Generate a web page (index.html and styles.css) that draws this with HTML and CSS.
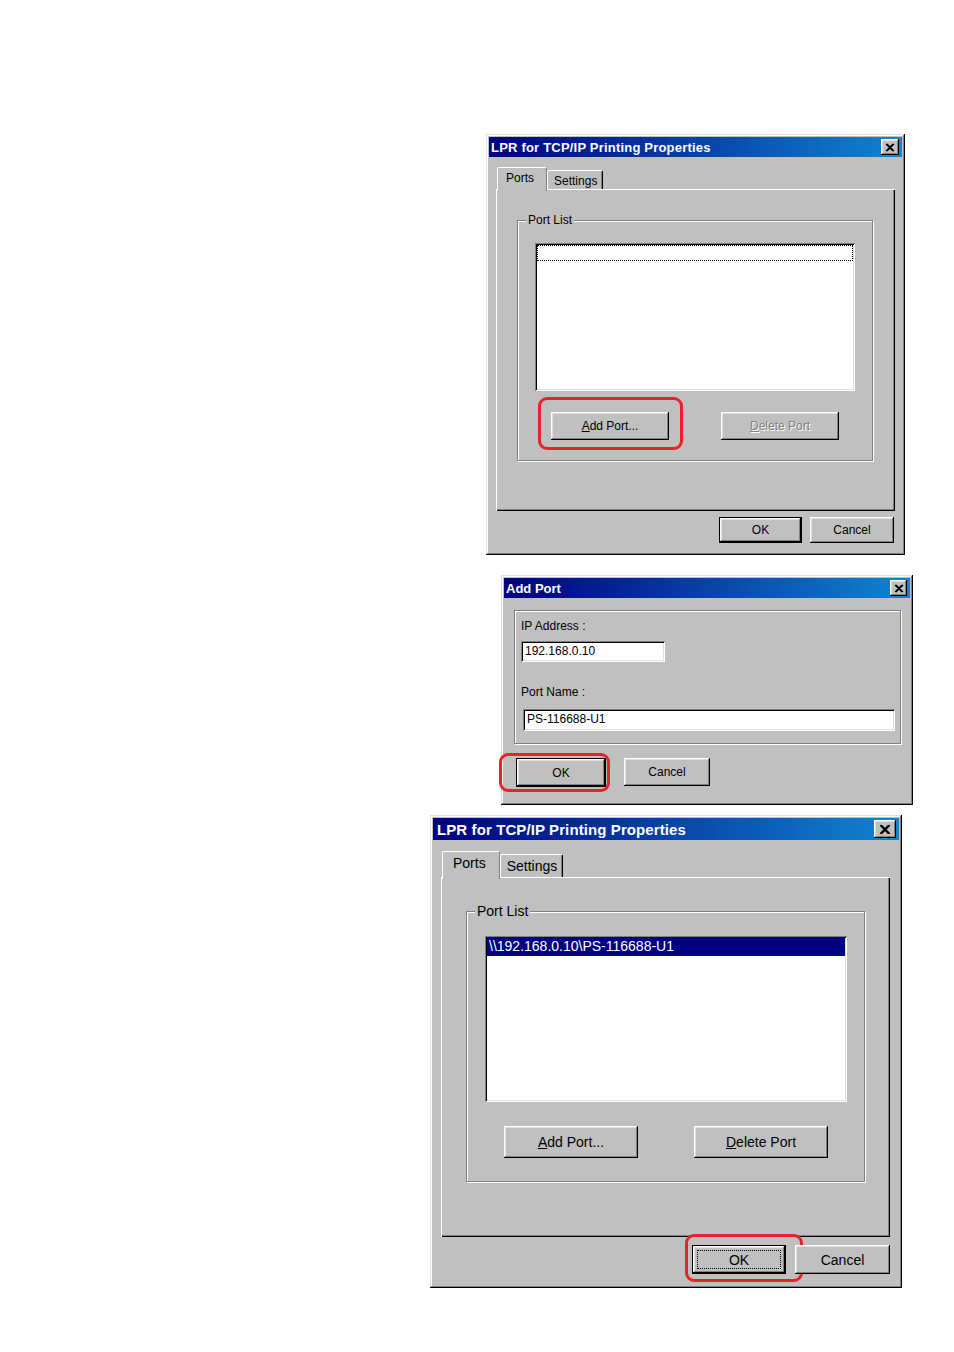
FILE: index.html
```html
<!DOCTYPE html>
<html>
<head>
  <meta charset="UTF-8">
  <title>LPR for TCP/IP Printing – Add Port</title>
  <link rel="stylesheet" href="styles.css">
</head>
<body>
  <div class="page">

    <!-- step 1: properties dialog, empty list -->
    <div class="win win-a">
      <div class="titlebar">
        <span class="title">LPR for TCP/IP Printing Properties</span>
        <span class="close"><svg viewBox="0 0 10 9"><path d="M1 1 L8 8 M2 1 L9 8 M8 1 L1 8 M9 1 L2 8" stroke="#000" stroke-width="1.2"/></svg></span>
      </div>
      <div class="tabs">
        <div class="tab active">Ports</div>
        <div class="tab">Settings</div>
      </div>
      <div class="tab-panel">
        <div class="group">
          <span class="group-label">Port List</span>
          <div class="listbox">
            <div class="list-row focus"></div>
          </div>
          <div class="group-buttons">
            <button class="btn marked"><u>A</u>dd Port...<span class="ring"></span></button>
            <button class="btn disabled"><u>D</u>elete Port</button>
          </div>
        </div>
      </div>
      <div class="dialog-buttons">
        <button class="btn default ok">OK</button>
        <button class="btn cancel">Cancel</button>
      </div>
    </div>

    <!-- step 2: add port -->
    <div class="win win-b">
      <div class="titlebar">
        <span class="title">Add Port</span>
        <span class="close"><svg viewBox="0 0 10 9"><path d="M1 1 L8 8 M2 1 L9 8 M8 1 L1 8 M9 1 L2 8" stroke="#000" stroke-width="1.2"/></svg></span>
      </div>
      <div class="group plain">
        <div class="field-label">IP Address :</div>
        <div class="field field-ip">192.168.0.10</div>
        <div class="field-label second">Port Name :</div>
        <div class="field field-name">PS-116688-U1</div>
      </div>
      <div class="add-buttons">
        <button class="btn default ok marked">OK<span class="ring"></span></button>
        <button class="btn cancel">Cancel</button>
      </div>
    </div>

    <!-- step 3: properties dialog, port added -->
    <div class="win win-c">
      <div class="titlebar">
        <span class="title">LPR for TCP/IP Printing Properties</span>
        <span class="close"><svg viewBox="0 0 10 9"><path d="M1 1 L8 8 M2 1 L9 8 M8 1 L1 8 M9 1 L2 8" stroke="#000" stroke-width="1.2"/></svg></span>
      </div>
      <div class="tabs">
        <div class="tab active">Ports</div>
        <div class="tab">Settings</div>
      </div>
      <div class="tab-panel">
        <div class="group">
          <span class="group-label">Port List</span>
          <div class="listbox">
            <div class="list-row selected">\\192.168.0.10\PS-116688-U1</div>
          </div>
          <div class="group-buttons">
            <button class="btn"><u>A</u>dd Port...</button>
            <button class="btn"><u>D</u>elete Port</button>
          </div>
        </div>
      </div>
      <div class="dialog-buttons">
        <button class="btn default ok marked"><span class="focus-box">OK</span><span class="ring"></span></button>
        <button class="btn cancel">Cancel</button>
      </div>
    </div>

  </div>
</body>
</html>
```

FILE: styles.css
```css
* {
  box-sizing: border-box;
}

body {
  margin: 0;
  background: #fff;
  font-family: "Liberation Sans", Arial, sans-serif;
  font-size: 12px;
  color: #000;
}

.page {
  width: 954px;
  height: 1352px;
  padding-top: 134px;
}

/* window frame */
.win {
  background: #c0c0c0;
  padding: 3px;
  box-shadow: inset -1px -1px #000, inset 1px 1px #dfdfdf,
              inset -2px -2px #808080, inset 2px 2px #fff;
}

.titlebar {
  display: flex;
  align-items: center;
  justify-content: space-between;
  height: 20px;
  padding: 0 3px 0 2px;
  background: linear-gradient(90deg, #000080, #1084d0);
  color: #fff;
}

.title {
  font-weight: bold;
  font-size: 13px;
  letter-spacing: 0.2px;
}

.close {
  display: flex;
  align-items: center;
  justify-content: center;
  width: 18px;
  height: 16px;
  background: #c0c0c0;
  box-shadow: inset -1px -1px #000, inset 1px 1px #fff,
              inset -2px -2px #808080, inset 2px 2px #dfdfdf;
}

.close svg {
  width: 10px;
  height: 9px;
}

/* tabs */
.tabs {
  display: flex;
  align-items: flex-end;
  position: relative;
  z-index: 1;
  height: 22px;
  margin: 10px 0 0 8px;
}

.tab {
  height: 19px;
  padding: 3px 5px 0 6px;
  background: #c0c0c0;
  border-top: 1px solid #fff;
  border-left: 1px solid #fff;
  border-right: 1px solid #000;
  border-radius: 2px 2px 0 0;
  box-shadow: inset -1px 0 #808080;
}

.tab.active {
  height: 24px;
  margin-bottom: -2px;
  padding: 3px 12px 0 8px;
  border-right-color: #808080;
  box-shadow: none;
}

.tab-panel {
  position: relative;
  margin-left: 7px;
  width: 399px;
  height: 322px;
  padding-top: 31px;
  box-shadow: inset 1px 1px #fff, inset -1px -1px #000, inset -2px -2px #808080;
}

/* group box */
.group {
  position: relative;
  margin: 0 22px 0 21px;
  height: 241px;
  padding-top: 22px;
  border: 1px solid #808080;
  box-shadow: inset 1px 1px #fff, 1px 1px #fff;
}

.group-label {
  position: absolute;
  top: -8px;
  left: 8px;
  padding: 0 2px;
  background: #c0c0c0;
}

.listbox {
  margin: 0 17px 0 17px;
  height: 148px;
  padding: 2px;
  background: #fff;
  box-shadow: inset 1px 1px #808080, inset -1px -1px #fff,
              inset 2px 2px #000, inset -2px -2px #dfdfdf;
}

.list-row {
  height: 16px;
}

.list-row.focus {
  border: 1px dotted #000;
}

.list-row.selected {
  height: 19px;
  padding-left: 2px;
  line-height: 19px;
  background: #000080;
  color: #fff;
}

.group-buttons {
  display: flex;
  justify-content: space-between;
  margin-top: 21px;
  padding: 0 33px;
}

/* buttons */
.btn {
  position: relative;
  display: flex;
  align-items: center;
  justify-content: center;
  width: 118px;
  height: 28px;
  padding: 0;
  border: none;
  background: #c0c0c0;
  font-family: inherit;
  font-size: inherit;
  color: #000;
  box-shadow: inset -1px -1px #000, inset 1px 1px #fff,
              inset -2px -2px #808080, inset 2px 2px #dfdfdf;
}

.btn.default {
  border: 1px solid #000;
}

.btn.disabled {
  color: #808080;
  text-shadow: 1px 1px #fff;
}

.btn u {
  text-decoration: underline;
}

.dialog-buttons {
  display: flex;
  justify-content: flex-end;
  gap: 8px;
  margin-top: 6px;
  padding-right: 8px;
}

.dialog-buttons .ok {
  width: 83px;
  height: 26px;
}

.dialog-buttons .cancel {
  width: 84px;
  height: 26px;
}

/* red highlight around the button to press */
.ring {
  position: absolute;
  top: -15px;
  left: -13px;
  width: 145px;
  height: 53px;
  border: 3px solid #e8212b;
  border-radius: 9px;
}

/* window 1 */
.win-a {
  width: 419px;
  height: 421px;
  margin-left: 486px;
}

/* window 2: Add Port */
.win-b {
  width: 412px;
  height: 230px;
  margin: 20px 0 0 501px;
}

.win-b .title {
  font-size: 13px;
  letter-spacing: 0;
}

.win-b .close {
  width: 17px;
}

.group.plain {
  margin: 12px 9px 0 10px;
  height: 134px;
  padding: 8px 0 0 6px;
}

.field-label {
  height: 14px;
  line-height: 14px;
}

.field-label.second {
  margin-top: 23px;
}

.field {
  height: 21px;
  margin-top: 8px;
  padding: 3px 0 0 4px;
  background: #fff;
  box-shadow: inset 1px 1px #808080, inset -1px -1px #fff,
              inset 2px 2px #000, inset -2px -2px #dfdfdf;
}

.field-ip {
  width: 144px;
}

.field-name {
  width: 372px;
  height: 22px;
  margin: 10px 0 0 2px;
}

.add-buttons {
  display: flex;
  gap: 18px;
  margin: 14px 0 0 12px;
}

.add-buttons .ok {
  width: 90px;
  height: 29px;
}

.add-buttons .cancel {
  width: 86px;
  height: 28px;
}

.add-buttons .ring {
  top: -6px;
  left: -18px;
  width: 111px;
  height: 39px;
}

/* window 3 */
.win-c {
  width: 472px;
  height: 473px;
  margin: 10px 0 0 430px;
  font-size: 14px;
}

.win-c .titlebar {
  height: 22px;
  padding-left: 4px;
}

.win-c .title {
  font-size: 15px;
  letter-spacing: 0.1px;
}

.win-c .close {
  width: 22px;
  height: 18px;
}

.win-c .close svg {
  width: 12px;
  height: 11px;
}

.win-c .tabs {
  height: 26px;
  margin: 11px 0 0 9px;
}

.win-c .tab {
  height: 23px;
  padding: 3px 5px 0 6px;
}

.win-c .tab.active {
  height: 28px;
  padding: 3px 13px 0 10px;
}

.win-c .tab-panel {
  margin-left: 8px;
  width: 449px;
  height: 360px;
  padding-top: 34px;
}

.win-c .group {
  margin: 0 25px;
  height: 271px;
  padding-top: 24px;
}

.win-c .group-label {
  top: -9px;
}

.win-c .listbox {
  margin: 0 17px 0 18px;
  height: 166px;
  padding: 1px 2px 2px 2px;
}

.win-c .group-buttons {
  margin-top: 24px;
  padding: 0 36px 0 37px;
}

.win-c .group-buttons .btn {
  width: 134px;
  height: 32px;
}

.win-c .dialog-buttons {
  gap: 9px;
  margin-top: 8px;
  padding-right: 9px;
}

.win-c .dialog-buttons .ok {
  width: 94px;
  height: 29px;
}

.win-c .dialog-buttons .cancel {
  width: 95px;
  height: 29px;
}

.focus-box {
  display: flex;
  align-items: center;
  justify-content: center;
  width: 84px;
  height: 19px;
  border: 1px dotted #000;
}

.win-c .ring {
  top: -12px;
  left: -8px;
  width: 118px;
  height: 48px;
}
```
